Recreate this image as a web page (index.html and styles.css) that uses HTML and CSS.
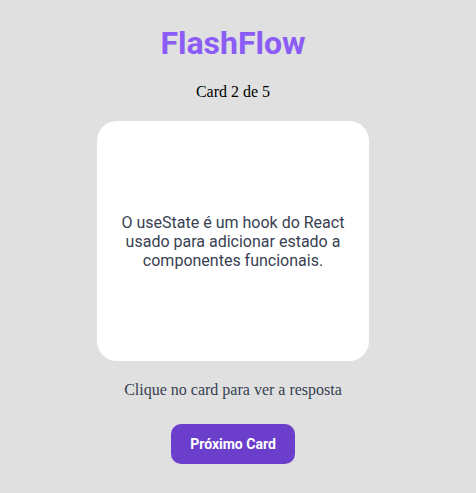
FILE: index.html
```html
<!DOCTYPE html>
<html lang="pt">
<head>
<meta charset="utf-8">
<link rel="stylesheet" href="styles.css">
</head>
<body>
<main class="app">
  <h1 class="title">FlashFlow</h1>
  <p class="counter">Card 2 de 5</p>
  <div class="card">
    <p class="card-text">O useState é um hook do React usado para adicionar estado a componentes funcionais.</p>
  </div>
  <p class="hint">Clique no card para ver a resposta</p>
  <button class="next">Próximo Card</button>
</main>
</body>
</html>
```
FILE: styles.css
```css
html, body {
  margin: 0;
  padding: 0;
  background: #e0e0e0;
}
.app {
  display: flex;
  flex-direction: column;
  align-items: center;
  padding-top: 24px;
  padding-right: 10px;
}
.title {
  margin: 0;
  font-family: Roboto, sans-serif;
  font-weight: 700;
  font-size: 32px;
  line-height: 38px;
  color: #8b5cf6;
}
.counter {
  margin: 21px 0 0;
  font-family: "Liberation Serif", serif;
  font-size: 16px;
  line-height: 18px;
  color: #000;
}
.card {
  margin-top: 20px;
  width: 272px;
  height: 240px;
  box-sizing: border-box;
  padding: 0 20px;
  background: #fff;
  border-radius: 20px;
  display: flex;
  align-items: center;
  justify-content: center;
}
.card-text {
  margin: 0;
  text-align: center;
  font-family: Roboto, sans-serif;
  font-size: 16px;
  line-height: 19px;
  color: #374151;
}
.hint {
  margin: 20px 0 0;
  font-family: "Liberation Serif", serif;
  font-size: 16px;
  line-height: 18px;
  color: #374151;
}
.next {
  margin-top: 25px;
  width: 124px;
  height: 40px;
  border: none;
  border-radius: 10px;
  background: #6b3fcb;
  color: #fff;
  font-family: Roboto, sans-serif;
  font-weight: 700;
  font-size: 14px;
  cursor: pointer;
}
```
